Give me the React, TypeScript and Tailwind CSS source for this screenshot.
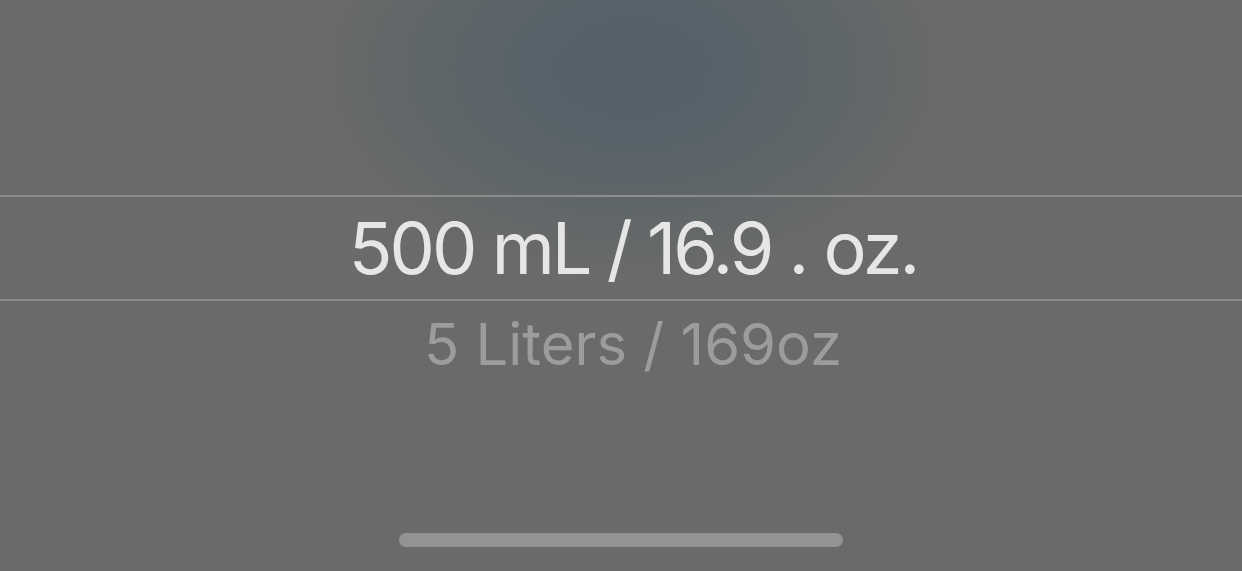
export default function App() {
  return (
    <div
      className="relative w-[1242px] h-[571px] overflow-hidden bg-[#6a6a6a]"
      style={{ fontFamily: 'Inter, "Noto Sans", sans-serif' }}
    >
      <div className="pointer-events-none absolute inset-0 bg-[radial-gradient(ellipse_320px_210px_at_632px_68px,#53606a_0%,#57626a_32%,#5f6668_64%,rgba(106,106,106,0)_100%)]" />
      <div className="relative flex flex-col">
        <div className="h-[195px]" />
        <div className="h-[2px] bg-[#8c8c8c]" />
        <div className="flex h-[102px] items-center justify-center pl-[24px]">
          <span className="text-[72px] leading-none tracking-[-3px] text-[#e6e6e6]">
            500 mL / 16.9 . oz.
          </span>
        </div>
        <div className="h-[2px] bg-[#8c8c8c]" />
        <div className="flex h-[86px] items-center justify-center pl-[24px]">
          <span className="text-[58px] leading-none tracking-[0px] text-[#9c9c9c]">
            5 Liters / 169oz
          </span>
        </div>
      </div>
      <div className="absolute left-[399px] top-[533px] h-[14px] w-[444px] rounded-full bg-[#939393]" />
    </div>
  );
}
